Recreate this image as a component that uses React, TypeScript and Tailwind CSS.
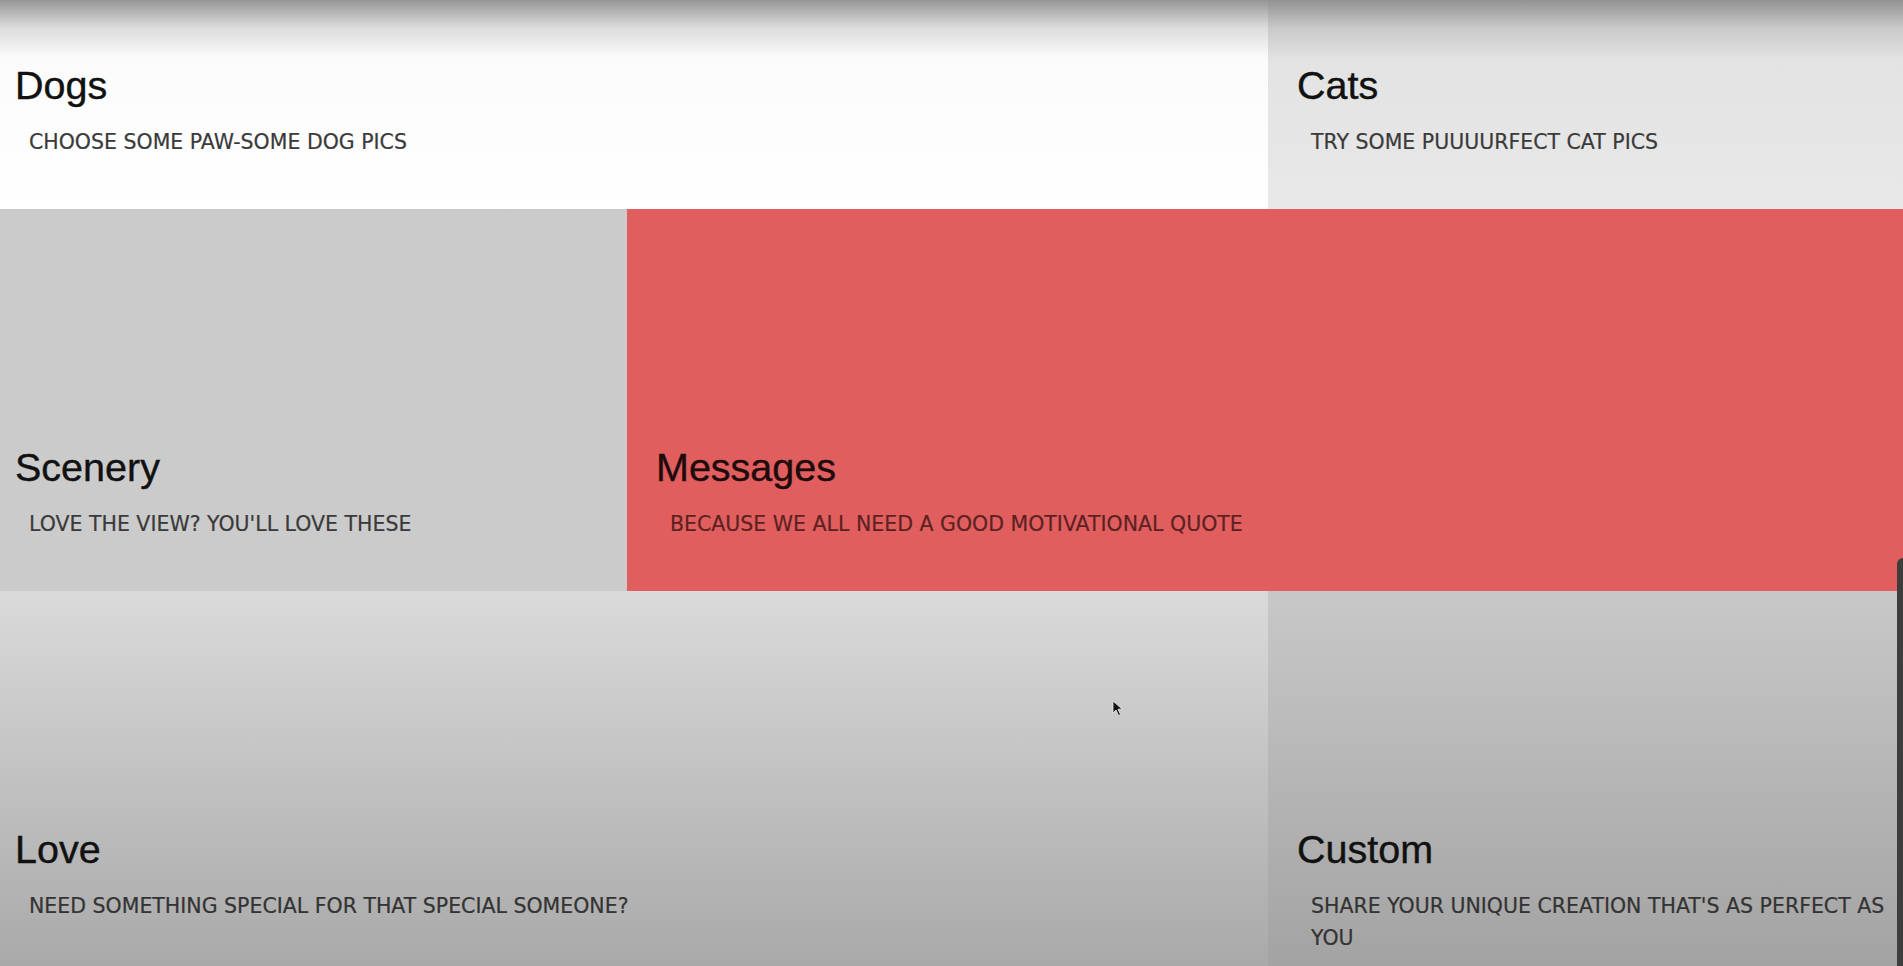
import React from 'react';

interface Tile {
  title: string;
  text: string;
  cls: string;
  titleColor: string;
  textColor: string;
}

const tiles: Tile[] = [
  // row 1 (page is scrolled, so only the lower part of it shows)
  {
    title: 'Dogs',
    text: 'Choose some paw-some dog pics',
    cls: 'col-span-2 bg-[linear-gradient(to_bottom,#969696_0px,#dcdcdc_28px,#fbfbfb_58px,#ffffff_100%)] pt-[64px] pl-[15px]',
    titleColor: 'text-[#111]',
    textColor: 'text-[#3a3a3a]',
  },
  {
    title: 'Cats',
    text: 'Try some puuuurfect cat pics',
    cls: 'bg-[linear-gradient(to_bottom,#929292_0px,#c9c9c9_28px,#e3e3e3_60px,#e8e8e8_100%)] pt-[64px] pl-[29px]',
    titleColor: 'text-[#111]',
    textColor: 'text-[#3a3a3a]',
  },
  // row 2
  {
    title: 'Scenery',
    text: "Love the view? You'll love these",
    cls: 'bg-[#cbcbcb] pt-[237px] pl-[15px]',
    titleColor: 'text-[#111]',
    textColor: 'text-[#3a3a3a]',
  },
  {
    title: 'Messages',
    text: 'Because we all need a good motivational quote',
    cls: 'col-span-2 bg-[#e15e5f] pt-[237px] pl-[29px]',
    titleColor: 'text-[#1e0b0b]',
    textColor: 'text-[#5c2222]',
  },
  // row 3
  {
    title: 'Love',
    text: 'Need something special for that special someone?',
    cls: 'col-span-2 bg-[linear-gradient(to_bottom,#dadada,#a9a9a9)] pt-[237px] pl-[15px]',
    titleColor: 'text-[#111]',
    textColor: 'text-[#333]',
  },
  {
    title: 'Custom',
    text: "Share your unique creation that's as perfect as you",
    cls: 'bg-[linear-gradient(to_bottom,#c8c8c8,#a3a3a3)] pt-[237px] pl-[29px]',
    titleColor: 'text-[#111]',
    textColor: 'text-[#333]',
  },
];

const Card = ({ t }: { t: Tile }) => (
  <div className={`flex flex-col overflow-hidden pr-[12px] ${t.cls}`}>
    <h2
      className={`text-[39.5px] leading-[1.1] font-normal [-webkit-text-stroke:0.4px_currentColor] ${t.titleColor}`}
      style={{ fontFamily: '"Liberation Sans", Arial, sans-serif' }}
    >
      {t.title}
    </h2>
    <p
      className={`mt-[20px] ml-[14px] text-[20.5px] leading-[31.6px] uppercase [-webkit-text-stroke:0.2px_currentColor] ${t.textColor}`}
      style={{ fontFamily: '"DejaVu Sans", Verdana, sans-serif' }}
    >
      {t.text}
    </p>
  </div>
);

export default function App() {
  return (
    <div className="relative h-screen w-full overflow-hidden bg-white">
      <div className="grid h-full grid-cols-[627px_641px_1fr] grid-rows-[209px_382px_375px]">
        {tiles.map((t) => (
          <Card key={t.title} t={t} />
        ))}
      </div>

      {/* scrollbar thumb */}
      <div className="absolute right-0 top-[558px] h-[420px] w-[6px] rounded-l-full bg-[#3d3d3d]" />

      {/* mouse pointer */}
      <svg className="absolute left-[1112px] top-[700px]" width="12" height="17" viewBox="0 0 12 17">
        <path d="M1 1 L1 13 L4 10 L6.5 15.5 L8.5 14.6 L6 9.2 L10.2 9.2 Z" fill="#111" stroke="#eee" strokeWidth="0.8" />
      </svg>
    </div>
  );
}
